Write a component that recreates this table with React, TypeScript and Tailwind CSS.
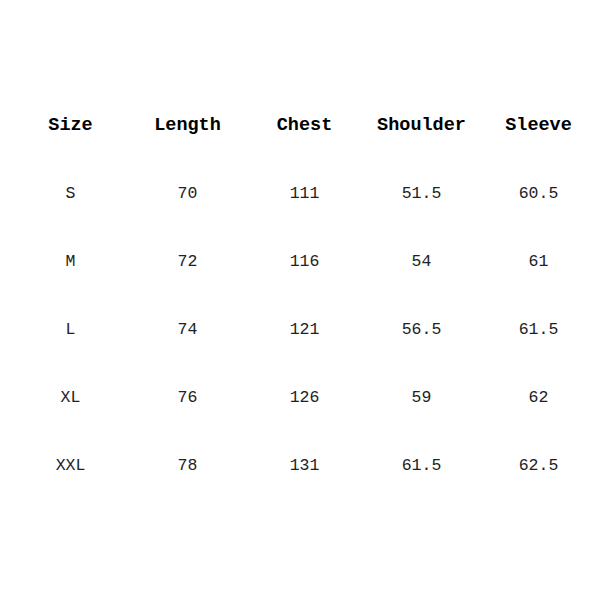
import React from 'react';

const headers = ['Size', 'Length', 'Chest', 'Shoulder', 'Sleeve'];

const rows = [
  ['S', '70', '111', '51.5', '60.5'],
  ['M', '72', '116', '54', '61'],
  ['L', '74', '121', '56.5', '61.5'],
  ['XL', '76', '126', '59', '62'],
  ['XXL', '78', '131', '61.5', '62.5'],
];

export default function App() {
  return (
    <div className="w-[600px] h-[600px] bg-white pt-[92px] pl-[12px] font-['Liberation_Mono',monospace] text-black">
      <div className="grid grid-cols-[repeat(5,117px)]">
        {headers.map((h) => (
          <div key={h} className="h-[68px] flex items-center justify-center text-[18.5px] font-bold">
            {h}
          </div>
        ))}
        {rows.map((r) =>
          r.map((c, i) => (
            <div key={r[0] + i} className="h-[68px] flex items-center justify-center text-[16.5px] text-[#222]">
              {c}
            </div>
          ))
        )}
      </div>
    </div>
  );
}
